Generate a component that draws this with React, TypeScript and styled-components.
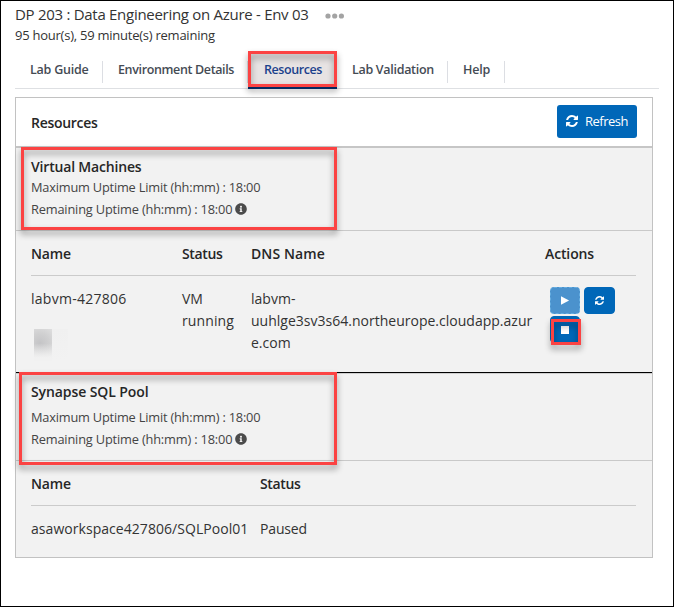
import React from 'react';
import styled, { createGlobalStyle, css } from 'styled-components';
import { FaInfoCircle } from 'react-icons/fa';

const GlobalStyle = createGlobalStyle`
  *, *::before, *::after { box-sizing: border-box; }
  body { margin: 0; background: #fff; }
`;

const Page = styled.div`
  position: relative;
  width: 674px;
  height: 607px;
  overflow: hidden;
  border: 1px solid #000;
  padding: 3px 0 0 14px;
  background: #fff;
  color: #333;
  font-family: 'Open Sans', 'Noto Sans', sans-serif;
  font-size: 14px;
`;

const Text = styled.span<{ $ls?: number }>`
  letter-spacing: ${({ $ls = 0 }) => $ls}px;
  white-space: nowrap;
`;

const TitleRow = styled.header`
  display: flex;
  align-items: center;
  gap: 16px;
  height: 21px;
  font-size: 15px;
  line-height: 21px;
`;

const MoreButton = styled.button`
  display: flex;
  padding: 3px 0 0;
  border: 0;
  background: none;
  color: #a3a3a3;
`;

const Remaining = styled.div`
  height: 20px;
  font-size: 13px;
  line-height: 20px;
`;

const TabBar = styled.nav`
  display: flex;
  width: 644px;
  height: 38px;
  margin-top: 6px;
  padding-top: 2px;
  border-bottom: 1px solid #dee0e3;
`;

const Tab = styled.a<{ $width: number; $active?: boolean }>`
  position: relative;
  flex: none;
  width: ${({ $width }) => $width}px;
  height: 36px;
  padding: 0 0 0 15px;
  color: #454b54;
  font-size: 12.5px;
  font-weight: 600;
  line-height: 34px;
  &::after {
    content: '';
    position: absolute;
    right: 0;
    top: 8px;
    width: 1px;
    height: 22px;
    background: #dcdee3;
  }
  ${({ $active }) =>
    $active &&
    css`
      padding-left: 16px;
      background: #e7e3e3;
      color: #1b418c;
      border-bottom: 2px solid #06306f;
      &::after { display: none; }
    `}
`;

const Panel = styled.main`
  width: 638px;
  height: 461px;
  margin-top: 8px;
  border: 1px solid #c2c2c2;
  background: #f2f2f2;
`;

const PanelHeader = styled.div`
  display: flex;
  justify-content: space-between;
  align-items: flex-start;
  height: 50px;
  padding: 7px 15px 0;
  border-bottom: 2px solid #c6c6c6;
  background: #fff;
`;

const PanelTitle = styled.h2`
  margin: 8px 0 0;
  color: #262626;
  font-size: 14px;
  font-weight: 600;
  line-height: 20px;
`;

const RefreshButton = styled.button`
  display: flex;
  align-items: center;
  gap: 7px;
  width: 80px;
  height: 33px;
  padding: 0 0 1px 9px;
  border: 0;
  border-radius: 3px;
  background: #0067b8;
  color: #fff;
  font: 400 13px/30px 'Open Sans', sans-serif;
`;

const Summary = styled.section<{ $height: number; $top: number; $gap: number }>`
  height: ${({ $height }) => $height}px;
  padding: ${({ $top }) => $top}px 15px 0;
  border-bottom: 1px solid #c9c9c9;
  h3 {
    margin: 0 0 ${({ $gap }) => $gap}px;
    color: #262626;
    font-size: 14px;
    font-weight: 600;
    line-height: 20px;
  }
`;

const Uptime = styled.div`
  display: flex;
  align-items: center;
  gap: 3px;
  height: 22px;
  color: #444;
  font-size: 12.8px;
  line-height: 22px;
  svg { color: #4b4b4b; }
`;

const Table = styled.div<{ $height: number; $divided?: boolean }>`
  height: ${({ $height }) => $height}px;
  padding: 0 16px 0 15px;
  ${({ $divided }) =>
    $divided &&
    css`
      border-bottom: 1px solid #000;
      box-shadow: 0 1px 0 #cfcfcf;
    `}
`;

const Row = styled.div<{ $columns: string; $head?: boolean }>`
  display: grid;
  grid-template-columns: ${({ $columns }) => $columns};
  line-height: 22px;
  padding-top: 12px;
  ${({ $head }) =>
    $head &&
    css`
      height: 45px;
      border-bottom: 1px solid #cbcbcb;
      color: #262626;
      font-weight: 600;
    `}
`;

const DnsName = styled.div`
  width: 286px;
  overflow-wrap: anywhere;
  letter-spacing: 0.01px;
`;

const Redacted = styled.div`
  display: flex;
  width: 34px;
  height: 32px;
  margin: 19px 0 0 3px;
  background: linear-gradient(#f0f0f0, #f2f2f2);
  &::before {
    content: '';
    width: 18px;
    height: 32px;
    background:
      linear-gradient(transparent 45%, #f1f1f1 90%),
      radial-gradient(circle at 6px 14px, #c4c4c6, #d0d0d1 45%, #e4e4e4 100%);
  }
`;

const Actions = styled.div`
  display: flex;
  flex-wrap: wrap;
  align-content: flex-start;
  gap: 2px 4px;
  margin-top: -1px;
  padding-left: 5px;
  width: 72px;
`;

const ActionButton = styled.button<{ $width?: number; $muted?: boolean }>`
  display: flex;
  align-items: center;
  justify-content: center;
  width: ${({ $width = 30 }) => $width}px;
  height: 27px;
  padding: 0;
  border: 1px ${({ $muted }) => ($muted ? 'dashed #66aee2' : 'solid #0067b8')};
  border-radius: 4px;
  background: ${({ $muted }) => ($muted ? '#4b92cd' : '#0067b8')};
  color: #fff;
`;

const Callout = styled.div<{ $x: number; $y: number; $w: number; $h: number }>`
  position: absolute;
  left: ${({ $x }) => $x - 1}px;
  top: ${({ $y }) => $y - 1}px;
  width: ${({ $w }) => $w}px;
  height: ${({ $h }) => $h}px;
  border: 3px solid #fb4343;
  filter: drop-shadow(0 4px 3px rgba(0, 0, 0, 0.42));
  pointer-events: none;
`;

const RefreshIcon = ({ size }: { size: number }) => (
  <svg width={size} height={size} viewBox="0 0 1536 1536" fill="currentColor">
    <path d="M1511 928q0 5-1 7-64 268-268 434.500t-478 166.500q-146 0-282.500-55t-243.500-157l-129 129q-19 19-45 19t-45-19-19-45v-448q0-26 19-45t45-19h448q26 0 45 19t19 45-19 45l-137 137q71 66 161 102t187 36q134 0 250-65t186-179q11-17 53-117 8-23 30-23h192q13 0 22.500 9.500t9.500 22.500zM1536 128v448q0 26-19 45t-45 19h-448q-26 0-45-19t-19-45 19-45l138-138q-148-137-349-137-134 0-250 65t-186 179q-11 17-53 117-8 23-30 23h-199q-13 0-22.500-9.500t-9.500-22.500v-7q65-268 270-434.500t480-166.500q146 0 284 55.500t245 156.500l130-129q19-19 45-19t45 19 19 45z" />
  </svg>
);

const UptimeLines = () => (
  <>
    <Uptime><Text $ls={-0.2}>Maximum Uptime Limit (hh:mm) : 18:00</Text></Uptime>
    <Uptime>
      <Text $ls={-0.17}>Remaining Uptime (hh:mm) : 18:00</Text>
      <FaInfoCircle size={12} />
    </Uptime>
  </>
);

const tabs = [
  { label: 'Lab Guide', width: 88, ls: -0.23 },
  { label: 'Environment Details', width: 145, ls: -0.36 },
  { label: 'Resources', width: 89, ls: -0.41, active: true },
  { label: 'Lab Validation', width: 111, ls: -0.3 },
  { label: 'Help', width: 57, ls: -0.22 },
];

const vmColumns = '151px 69px 294px 76px';
const poolColumns = '229px 1fr';

export default function App() {
  return (
    <>
      <GlobalStyle />
      <Page>
        <TitleRow>
          <Text $ls={-0.286}>DP 203 : Data Engineering on Azure - Env 03</Text>
          <MoreButton aria-label="More">
            <svg width="20" height="6" viewBox="0 0 20 6" fill="currentColor">
              <circle cx="3" cy="3" r="2.6" />
              <circle cx="9.7" cy="3" r="2.6" />
              <circle cx="16.4" cy="3" r="2.6" />
            </svg>
          </MoreButton>
        </TitleRow>
        <Remaining><Text $ls={-0.245}>95 hour(s), 59 minute(s) remaining</Text></Remaining>

        <TabBar>
          {tabs.map((tab) => (
            <Tab key={tab.label} $width={tab.width} $active={tab.active}>
              <Text $ls={tab.ls}>{tab.label}</Text>
            </Tab>
          ))}
        </TabBar>

        <Panel>
          <PanelHeader>
            <PanelTitle><Text $ls={-0.29}>Resources</Text></PanelTitle>
            <RefreshButton>
              <RefreshIcon size={12} />
              <Text $ls={-0.5}>Refresh</Text>
            </RefreshButton>
          </PanelHeader>

          <Summary $height={83} $top={9} $gap={-1}>
            <h3><Text $ls={-0.18}>Virtual Machines</Text></h3>
            <UptimeLines />
          </Summary>
          <Table $height={142} $divided>
            <Row $columns={vmColumns} $head>
              <Text $ls={-0.14}>Name</Text>
              <Text $ls={-0.35}>Status</Text>
              <Text $ls={0.1}>DNS Name</Text>
              <Text $ls={-0.13}>Actions</Text>
            </Row>
            <Row $columns={vmColumns}>
              <div>
                <Text $ls={0.26}>labvm-427806</Text>
                <Redacted />
              </div>
              <div>
                <Text>VM</Text>
                <br />
                <Text $ls={0.1}>running</Text>
              </div>
              <DnsName>labvm-uuhlge3sv3s64.northeurope.cloudapp.azure.com</DnsName>
              <Actions>
                <ActionButton $muted aria-label="Start">
                  <svg width="9" height="9" viewBox="0 0 9 9" fill="currentColor">
                    <path d="M0 0.3 8.1 4.5 0 8.7Z" />
                  </svg>
                </ActionButton>
                <ActionButton $width={31} aria-label="Restart"><RefreshIcon size={9} /></ActionButton>
                <ActionButton aria-label="Stop">
                  <svg width="8" height="8" viewBox="0 0 8 8" fill="currentColor">
                    <rect width="8" height="8" />
                  </svg>
                </ActionButton>
              </Actions>
            </Row>
          </Table>

          <Summary $height={88} $top={9} $gap={4}>
            <h3><Text $ls={-0.09}>Synapse SQL Pool</Text></h3>
            <UptimeLines />
          </Summary>
          <Table $height={96}>
            <Row $columns={poolColumns} $head>
              <Text $ls={-0.14}>Name</Text>
              <Text $ls={-0.35}>Status</Text>
            </Row>
            <Row $columns={poolColumns}>
              <Text $ls={0.05}>asaworkspace427806/SQLPool01</Text>
              <Text $ls={-0.15}>Paused</Text>
            </Row>
          </Table>
        </Panel>

        <Callout $x={248} $y={51} $w={89} $h={36} />
        <Callout $x={21} $y={147} $w={316} $h={83} />
        <Callout $x={551} $y={319} $w={30} $h={26} />
        <Callout $x={19} $y={372} $w={318} $h={93} />
      </Page>
    </>
  );
}
